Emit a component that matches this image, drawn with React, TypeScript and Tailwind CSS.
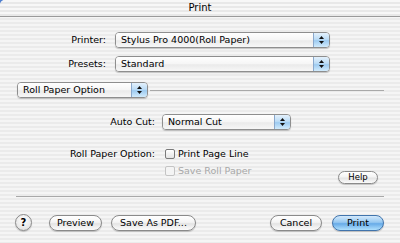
import React from 'react';

const font = 'font-["DejaVu_Sans","Liberation_Sans",sans-serif]';

const Stepper = () => (
  <div className="flex h-full w-[16px] flex-col items-center justify-center gap-[2px] border-l border-[#8aa8cc] bg-[linear-gradient(180deg,#e4f1fc_0%,#bcdcf6_45%,#9dcbf1_55%,#d2ebfc_100%)]">
    <svg width="5" height="3" viewBox="0 0 5 3"><path d="M2.5 0L5 3H0z" fill="#111" /></svg>
    <svg width="5" height="3" viewBox="0 0 5 3"><path d="M0 0H5L2.5 3z" fill="#111" /></svg>
  </div>
);

interface PopupProps {
  text: string;
  width: string;
}

const Popup: React.FC<PopupProps> = ({ text, width }) => (
  <div className={`flex h-[16px] ${width} overflow-hidden rounded-[4px] border border-[#8e8e8e] shadow-[0_1px_1px_rgba(0,0,0,0.2)]`}>
    <div className="flex flex-1 items-center bg-[linear-gradient(180deg,#ffffff_0%,#f5f5f5_50%,#eaeaea_55%,#f7f7f7_100%)] pl-[5px] text-[9.5px] leading-none text-black">
      {text}
    </div>
    <Stepper />
  </div>
);

interface ButtonProps {
  label: string;
  width: string;
  primary?: boolean;
  small?: boolean;
}

const AquaButton: React.FC<ButtonProps> = ({ label, width, primary, small }) => (
  <div
    className={`flex ${small ? 'h-[13px] text-[8.5px]' : 'h-[16px] text-[9.5px]'} ${width} items-center justify-center rounded-full border leading-none text-black shadow-[0_1px_1px_rgba(0,0,0,0.2)]
      ${primary
        ? 'border-[#4174ac] bg-[linear-gradient(180deg,#d3e9fc_0%,#96c8f1_45%,#67abe8_55%,#b0e0fd_100%)]'
        : 'border-[#8a8a8a] bg-[linear-gradient(180deg,#ffffff_0%,#f4f4f4_45%,#e4e4e4_55%,#fbfbfb_100%)]'}`}
  >
    {label}
  </div>
);

export default function App() {
  return (
    <div className={`h-[243px] w-[400px] overflow-hidden bg-[#4f7fcf] ${font}`}>
      <div className="flex h-full w-full flex-col overflow-hidden rounded-tl-[5px] bg-[repeating-linear-gradient(180deg,#f5f5f5_0px,#f5f5f5_2px,#ebebeb_2px,#ebebeb_4px)]">
        {/* Title bar */}
        <div className="flex h-[17px] shrink-0 items-center justify-center border-b border-[#9a9a9a] bg-[repeating-linear-gradient(180deg,#f7f7f7_0px,#f7f7f7_2px,#e8e8e8_2px,#e8e8e8_4px)] text-[10px] leading-none text-black">
          Print
        </div>

        {/* Printer / Presets */}
        <div className="mt-[15px] flex items-center">
          <div className="w-[106px] text-right text-[9.5px] leading-none">Printer:</div>
          <div className="ml-[9px]"><Popup text="Stylus Pro 4000(Roll Paper)" width="w-[215px]" /></div>
        </div>
        <div className="mt-[8px] flex items-center">
          <div className="w-[106px] text-right text-[9.5px] leading-none">Presets:</div>
          <div className="ml-[9px]"><Popup text="Standard" width="w-[215px]" /></div>
        </div>

        {/* Panel selector */}
        <div className="mt-[10px] flex items-center pl-[17px]">
          <Popup text="Roll Paper Option" width="w-[131px]" />
          <div className="ml-[2px] h-[1px] w-[234px] bg-[#a9a9a9]" />
        </div>

        {/* Auto Cut */}
        <div className="mt-[16px] flex items-center">
          <div className="w-[155px] text-right text-[9.5px] leading-none">Auto Cut:</div>
          <div className="ml-[7px]"><Popup text="Normal Cut" width="w-[129px]" /></div>
        </div>

        {/* Roll paper options */}
        <div className="mt-[19px] flex items-center">
          <div className="w-[155px] text-right text-[9.5px] leading-none">Roll Paper Option:</div>
          <div className="ml-[10px] h-[10px] w-[10px] rounded-[2px] border border-[#7a7a7a] bg-[linear-gradient(180deg,#ffffff,#e4e4e4)]" />
          <div className="ml-[3px] text-[9.5px] leading-none">Print Page Line</div>
        </div>
        <div className="mt-[7px] flex items-start">
          <div className="ml-[165px] flex items-center">
            <div className="h-[10px] w-[10px] rounded-[2px] border border-[#c4c4c4] bg-[#f4f4f4]" />
            <div className="ml-[3px] text-[9.5px] leading-none text-[#a8a8a8]">Save Roll Paper</div>
          </div>
          <div className="ml-auto mr-[22px] mt-[5px]">
            <AquaButton label="Help" width="w-[40px]" small />
          </div>
        </div>

        {/* Separator */}
        <div className="mx-[16px] mt-[12px] h-[1px] bg-[#a9a9a9]" />

        {/* Bottom buttons */}
        <div className="mt-[17px] flex items-center pl-[15px] pr-[16px]">
          <div className="flex h-[17px] w-[17px] items-center justify-center rounded-full border border-[#8a8a8a] bg-[radial-gradient(circle_at_50%_35%,#ffffff,#dcdcdc)] text-[10px] font-bold leading-none shadow-[0_1px_1px_rgba(0,0,0,0.2)]">
            ?
          </div>
          <div className="ml-[17px]"><AquaButton label="Preview" width="w-[53px]" /></div>
          <div className="ml-[9px]"><AquaButton label="Save As PDF..." width="w-[85px]" /></div>
          <div className="ml-auto"><AquaButton label="Cancel" width="w-[52px]" /></div>
          <div className="ml-[10px]"><AquaButton label="Print" width="w-[52px]" primary /></div>
        </div>
      </div>
    </div>
  );
}
